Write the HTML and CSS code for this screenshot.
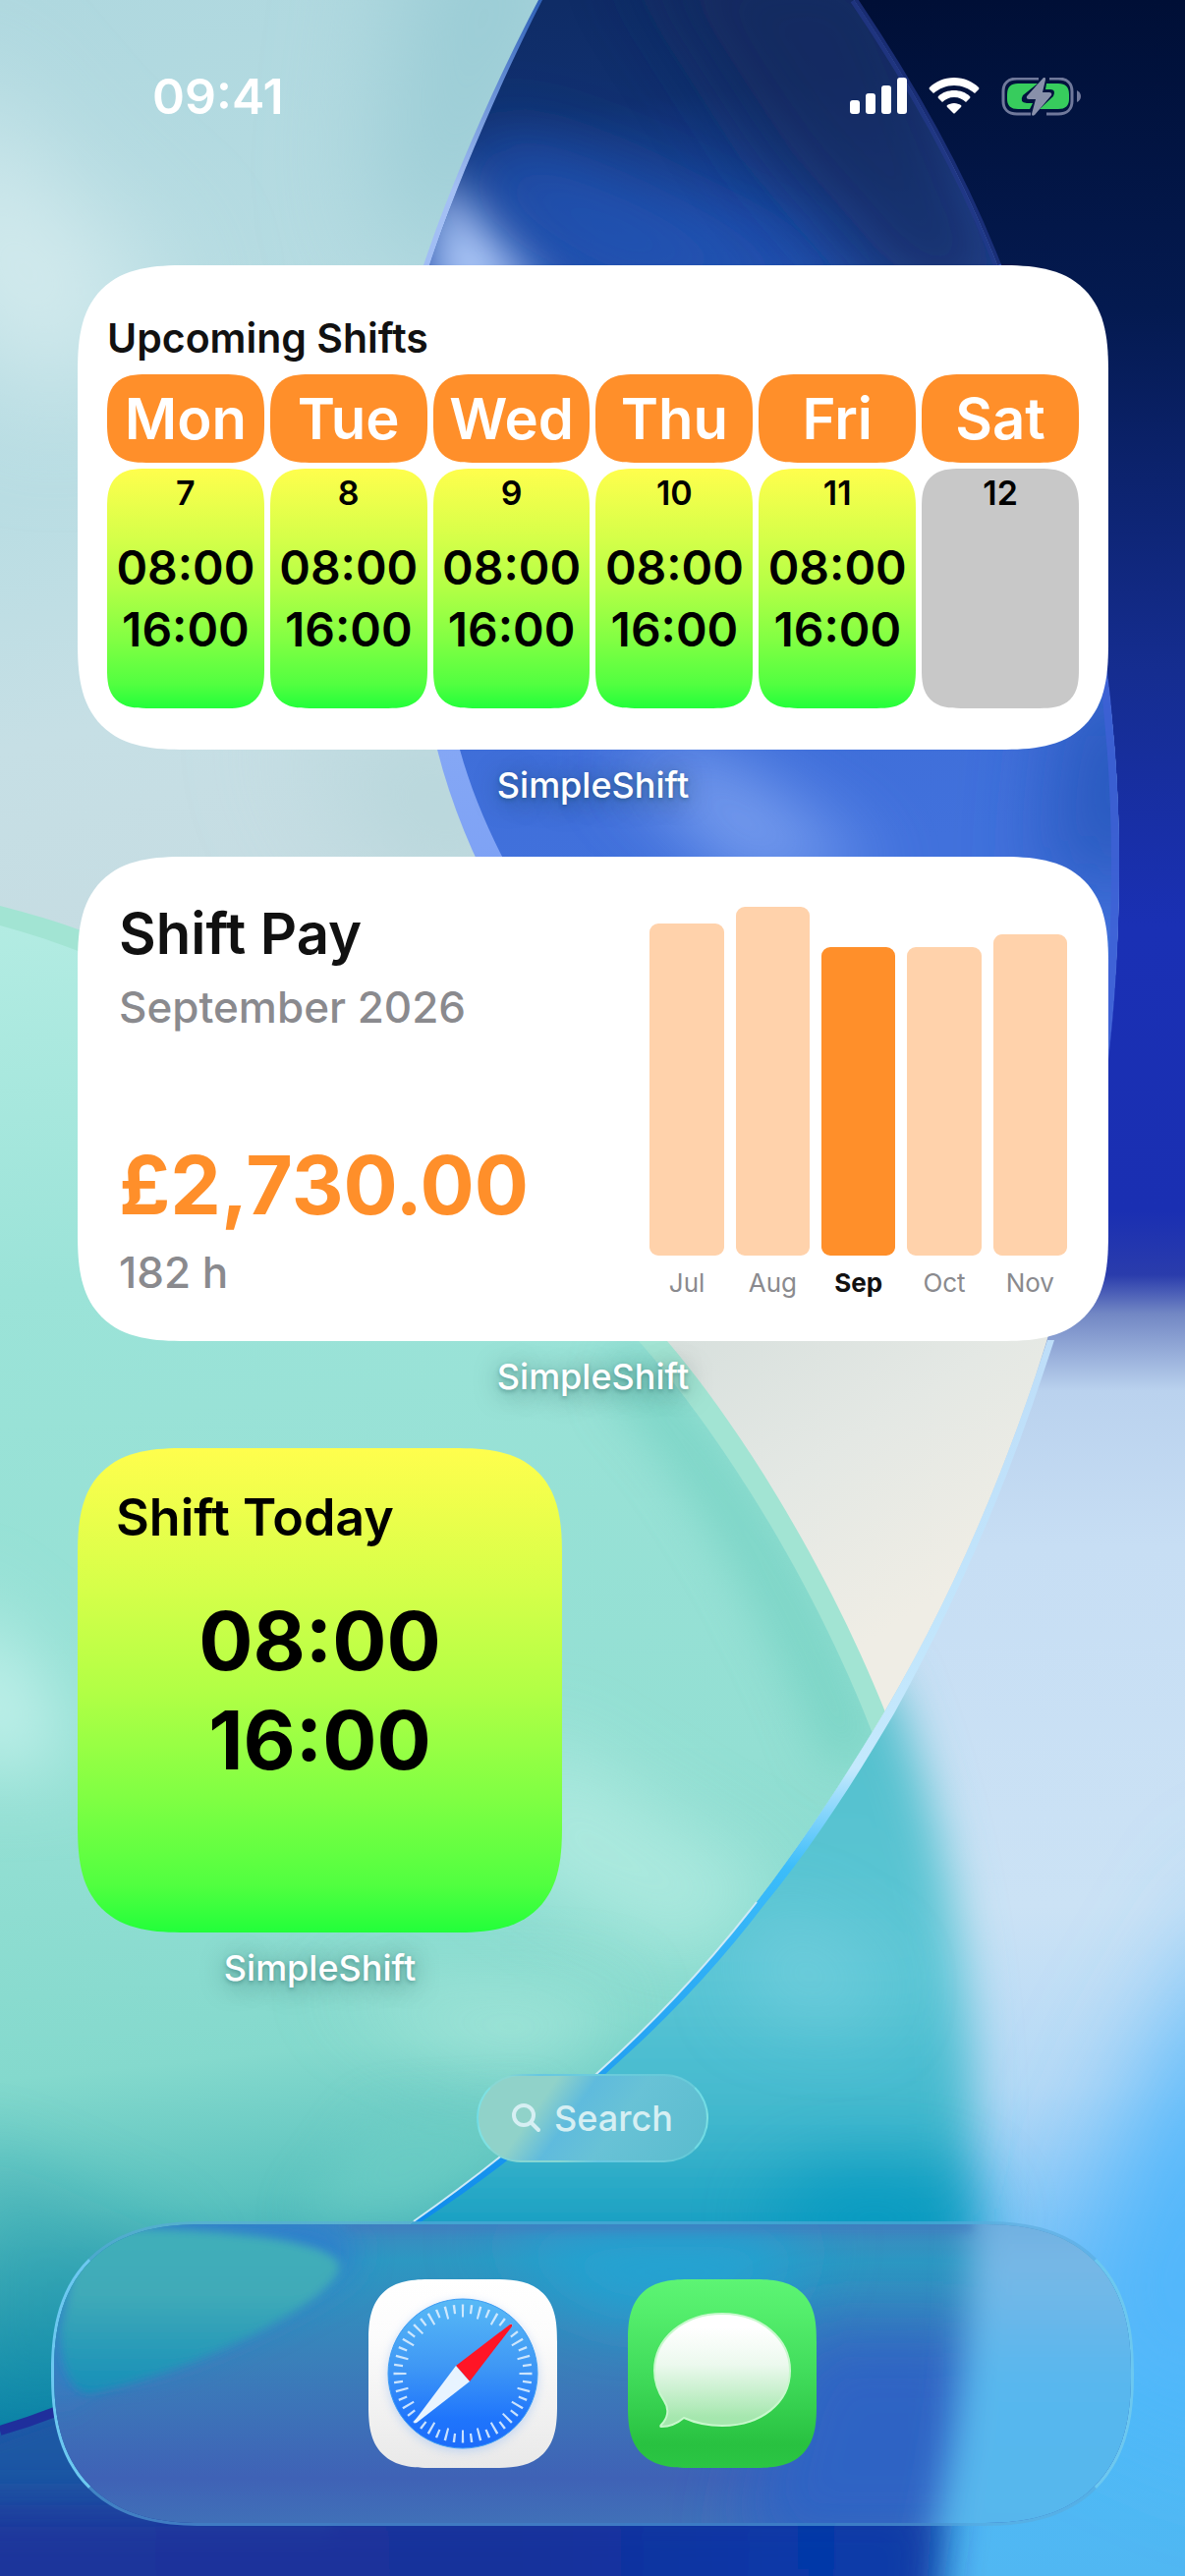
FILE: index.html
```html
<!DOCTYPE html>
<html lang="en">
    <head>
        <meta charset="utf-8">
        <title>Home screen</title>
        <link rel="stylesheet" href="styles.css">
    </head>
    <body>
        <div class="phone">
            <!-- wallpaper -->
            <svg class="wallpaper" viewBox="0 0 1206 2622" preserveAspectRatio="none" aria-hidden="true">
                <defs>
                    <linearGradient id="outer" x1="0" y1="0" x2="0" y2="1">
                        <stop offset="0" stop-color="#000f36"/>
                        <stop offset=".12" stop-color="#041a50"/>
                        <stop offset=".26" stop-color="#152d90"/>
                        <stop offset=".36" stop-color="#1a30b4"/>
                        <stop offset=".47" stop-color="#1a2fb2"/>
                        <stop offset=".495" stop-color="#2a3cac"/>
                        <stop offset=".51" stop-color="#7287c4"/>
                        <stop offset=".54" stop-color="#bad2ee"/>
                        <stop offset=".6" stop-color="#c7def4"/>
                        <stop offset=".74" stop-color="#cbe2f5"/>
                        <stop offset=".81" stop-color="#b5d9f6"/>
                        <stop offset=".87" stop-color="#80c4f8"/>
                        <stop offset=".93" stop-color="#4fbaf8"/>
                        <stop offset="1" stop-color="#50b7f2"/>
                    </linearGradient>
                    <linearGradient id="sky" x1="0" y1="0" x2="300" y2="1200" gradientUnits="userSpaceOnUse">
                        <stop offset="0" stop-color="#afd8df"/>
                        <stop offset=".4" stop-color="#b9dde3"/>
                        <stop offset=".6" stop-color="#c6dfe5"/>
                        <stop offset="1" stop-color="#c5d9df"/>
                    </linearGradient>
                    <linearGradient id="cream" x1="700" y1="1360" x2="900" y2="1660" gradientUnits="userSpaceOnUse">
                        <stop offset="0" stop-color="#d8e0dd"/>
                        <stop offset=".5" stop-color="#e4e8e4"/>
                        <stop offset="1" stop-color="#efede5"/>
                    </linearGradient>
                    <linearGradient id="lens" x1="600" y1="0" x2="700" y2="880" gradientUnits="userSpaceOnUse">
                        <stop offset="0" stop-color="#0f2c66"/>
                        <stop offset=".12" stop-color="#10306f"/>
                        <stop offset=".28" stop-color="#1c4aa6"/>
                        <stop offset=".6" stop-color="#3c6ad4"/>
                        <stop offset="1" stop-color="#4171dc"/>
                    </linearGradient>
                    <linearGradient id="lensEdge" x1="0" y1="0" x2="0" y2="880" gradientUnits="userSpaceOnUse">
                        <stop offset="0" stop-color="#2f61b8"/>
                        <stop offset=".22" stop-color="#a4c0f4"/>
                        <stop offset="1" stop-color="#7ea2f5"/>
                    </linearGradient>
                    <linearGradient id="green" x1="0" y1="920" x2="160" y2="2480" gradientUnits="userSpaceOnUse">
                        <stop offset="0" stop-color="#b4ece3"/>
                        <stop offset=".25" stop-color="#9be3d8"/>
                        <stop offset=".6" stop-color="#93dfd3"/>
                        <stop offset=".76" stop-color="#84d9cd"/>
                        <stop offset=".85" stop-color="#5cc3bf"/>
                        <stop offset=".95" stop-color="#1c93ad"/>
                        <stop offset="1" stop-color="#0079a4"/>
                    </linearGradient>
                    <linearGradient id="deep" x1="0" y1="1740" x2="0" y2="2622" gradientUnits="userSpaceOnUse">
                        <stop offset="0" stop-color="#54c0cd"/>
                        <stop offset=".3" stop-color="#5cc6d5"/>
                        <stop offset=".48" stop-color="#40b7cd"/>
                        <stop offset=".6" stop-color="#179fc2"/>
                        <stop offset=".76" stop-color="#1b6fb4"/>
                        <stop offset=".88" stop-color="#1b43a0"/>
                        <stop offset="1" stop-color="#17309b"/>
                    </linearGradient>
                    <linearGradient id="floor" x1="0" y1="0" x2="960" y2="0" gradientUnits="userSpaceOnUse">
                        <stop offset="0" stop-color="#1e359b"/>
                        <stop offset=".55" stop-color="#18309b"/>
                        <stop offset=".85" stop-color="#0638a8"/>
                        <stop offset="1" stop-color="#083ea8"/>
                    </linearGradient>
                    <linearGradient id="rim" x1="0" y1="1300" x2="0" y2="2300" gradientUnits="userSpaceOnUse">
                        <stop offset="0" stop-color="#bddcf8"/>
                        <stop offset=".5" stop-color="#c4e9fd"/>
                        <stop offset=".6" stop-color="#3cbdfa"/>
                        <stop offset="1" stop-color="#0a86ea"/>
                    </linearGradient>
                    <clipPath id="disc">
                        <path d="M0 0H869C930 90 980 180 1015 270C1080 420 1139 640 1139 880C1139 1060 1110 1230 1054 1400C1010 1530 960 1640 901 1741C862 1806 818 1874 770 1936C722 1998 668 2056 607 2111C552 2162 490 2213 421 2261C290 2350 150 2425 0 2471Z"/>
                    </clipPath>
                    <clipPath id="lensShape">
                        <path d="M552 0C516 70 467 180 437 270C400 480 424 640 468 763C500 880 590 1020 690 1100H1206V0Z"/>
                    </clipPath>
                    <clipPath id="greenShape">
                        <path d="M0 942C30 950 60 960 90 972C330 1070 510 1205 650 1365C730 1455 830 1610 892 1775V2600H0Z"/>
                    </clipPath>
                    <filter id="b12" filterUnits="userSpaceOnUse" x="-200" y="-100" width="1600" height="2900"><feGaussianBlur stdDeviation="8"/></filter>
                    <filter id="b24" filterUnits="userSpaceOnUse" x="-200" y="-100" width="1600" height="2900"><feGaussianBlur stdDeviation="24"/></filter>
                    <filter id="b40" filterUnits="userSpaceOnUse" x="-200" y="-100" width="1600" height="2900"><feGaussianBlur stdDeviation="40"/></filter>
                    <filter id="b60" filterUnits="userSpaceOnUse" x="-300" y="-300" width="1800" height="3300"><feGaussianBlur stdDeviation="60"/></filter>
                </defs>
                <rect width="1206" height="2622" fill="url(#outer)"/>
                <path d="M1300 1900L1160 2140L1080 2400L1300 2500Z" fill="#4fb6fb" filter="url(#b60)"/>
                <path d="M901 1700C960 1850 996 2000 990 2240C988 2400 960 2500 935 2700H-100V2300L500 1900Z" fill="url(#deep)" filter="url(#b24)"/>
                <ellipse cx="890" cy="2260" rx="110" ry="50" fill="#0698c0" opacity=".8" filter="url(#b40)"/>
                <path d="M780 1940L900 2010L880 2060L760 2040Z" fill="#7ad2e0" opacity=".7" filter="url(#b40)"/>
                <path d="M-20 2487C140 2434 290 2364 430 2271L300 2700H-20Z" fill="#1c58a4" filter="url(#b12)"/>
                <path d="M-100 2550H950L930 2800H-100Z" fill="url(#floor)" filter="url(#b24)"/>
                <g clip-path="url(#disc)">
                    <rect width="1206" height="2622" fill="url(#sky)"/>
                    <path d="M-60 60L40 180L170 300L60 420L-80 300Z" fill="#d4ebee" filter="url(#b60)"/>
                    <path d="M430 -100L620 -100L460 300L390 200Z" fill="#98cbd4" filter="url(#b60)"/>
                    <path d="M300 740L500 740L560 900L420 900Z" fill="#b6d6da" filter="url(#b60)"/>
                    <path d="M548 0C511 70 461 180 431 270C390 480 400 620 445 763C480 900 560 1020 660 1100H1206V0Z" fill="url(#lensEdge)"/>
                    <g clip-path="url(#lensShape)">
                        <rect width="1206" height="1200" fill="url(#lens)"/>
                        <path d="M500 140L620 180L860 300L640 300L470 200Z" fill="#2352b2" filter="url(#b40)"/>
                        <path d="M440 170L560 310L440 310Z" fill="#b4cdfb" filter="url(#b24)"/>
                        <path d="M640 -60H900L1060 320L920 320L780 160Z" fill="#132c5e" opacity=".8" filter="url(#b40)"/>
                        <path d="M620 760L720 770L900 890L760 890Z" fill="#98b8fa" opacity=".8" filter="url(#b40)"/>
                        <path d="M1080 700H1200V900H1060Z" fill="#2a5ac0" filter="url(#b40)"/>
                    </g>
                    <path d="M560 1250H1206V2000H560Z" fill="url(#cream)"/>
                    <path d="M0 922C30 930 60 938 90 950C350 1050 540 1190 679 1365C760 1460 850 1610 908 1760V2600H0Z" fill="#a2e4d3"/>
                    <g clip-path="url(#greenShape)">
                        <rect y="900" width="1206" height="1700" fill="url(#green)"/>
                        <path d="M640 1360C740 1460 840 1610 900 1790L840 1800C790 1660 700 1500 620 1420Z" fill="#72d0c1" opacity=".7" filter="url(#b24)"/>
                        <path d="M540 1760L700 1860L800 1920L700 2000L500 1900Z" fill="#b4ece2" opacity=".8" filter="url(#b40)"/>
                        <path d="M-60 1620L40 1700L80 1800L-60 1800Z" fill="#c0f0ea" filter="url(#b40)"/>
                        <path d="M330 2020L640 2030L560 2110L460 2090Z" fill="#b0ebdf" opacity=".7" filter="url(#b40)"/>
                        <path d="M-40 2180L180 2280L200 2420L-40 2480Z" fill="#0d86a8" opacity=".3" filter="url(#b40)"/>
                        <path d="M380 2150L560 2140L430 2261L300 2261Z" fill="#6fcfc6" opacity=".6" filter="url(#b24)"/>
                    </g>
                </g>
                <!-- glass edge of the big disc -->
                <path d="M869 0C930 90 980 180 1015 270" fill="none" stroke="#24398c" stroke-width="8" opacity=".7"/>
                <path d="M1015 270C1080 420 1135 640 1135 880C1135 960 1130 1040 1120 1110" fill="none" stroke="#3f60d6" stroke-width="8" opacity=".8"/>
                <path d="M1066 1364L1054 1400C1010 1530 960 1640 901 1741C862 1806 818 1874 770 1936C722 1998 668 2056 607 2111C552 2162 490 2213 421 2261L428 2262C498 2216 562 2166 614 2113C678 2056 730 2002 776 1941C828 1878 870 1812 910 1744C966 1643 1018 1530 1061 1400L1073 1364Z" fill="url(#rim)"/>
                <path d="M770 1936C722 1998 668 2056 607 2111C552 2162 490 2213 421 2261" fill="none" stroke="#cdeaf7" stroke-width="2"/>
                <path d="M0 2474Q28 2466 56 2455" fill="none" stroke="#1f2f9c" stroke-width="10"/>
            </svg>

            <!-- status bar -->
            <header class="status">
                <time class="clock">09:41</time>
                <div class="indicators">
                    <svg width="58" height="38" viewBox="0 0 58 38" fill="#fff">
                        <rect x="0" y="23" width="10" height="14" rx="3"/>
                        <rect x="16" y="16" width="10" height="21" rx="3"/>
                        <rect x="32" y="8" width="10" height="29" rx="3"/>
                        <rect x="48" y="0" width="10" height="37" rx="3"/>
                    </svg>
                    <svg width="52" height="38" viewBox="0 0 52 38" fill="#fff">
                        <path d="M26 0C36 0 45 4 51 10Q52 11 51 12L47 16C41 11 34 8 26 8S11 11 5 16L1 12Q0 11 1 10C7 4 16 0 26 0Z"/>
                        <path d="M26 13C32 13 38 15 42 19Q43 20 42 21L38 25C35 22 31 20 26 20S17 22 14 25L10 21Q9 20 10 19C14 15 20 13 26 13Z"/>
                        <path d="M26 26C29 26 31 27 33 28Q34 29 33 30L27 36Q26 37 25 36L19 30Q18 29 19 28C21 27 23 26 26 26Z"/>
                    </svg>
                    <svg width="82" height="42" viewBox="0 0 82 42">
                        <path d="M38 1H16C7 1 2 6 2 14V24C2 32 7 37 16 37H30M46 37H58C67 37 72 32 72 24V14C72 6 67 1 58 1H49" fill="none" stroke="#70799b" stroke-width="3"/>
                        <path d="M77 13Q81 15 81 19T77 25Z" fill="#70799b"/>
                        <path d="M37 6H17Q6 6 6 17V22Q6 32 17 32H29L32 26H26Q18 25 22 18Z" fill="#37cc5d"/>
                        <path d="M46 6H58Q69 6 69 17V22Q69 32 58 32H39L53 19Q56 12 50 12H45Z" fill="#37cc5d"/>
                        <path d="M43 0L26 19Q25 22 28 22H35L31 37Q31 40 34 38L51 18Q52 15 49 15H42L45 2Q45 -1 43 0Z" fill="#8890aa"/>
                    </svg>
                </div>
            </header>

            <main class="widgets">
                <section class="widget">
                    <div class="card upcoming">
                        <h2>Upcoming Shifts</h2>
                        <table class="shifts">
                            <thead>
                                <tr><th>Mon</th><th>Tue</th><th>Wed</th><th>Thu</th><th>Fri</th><th>Sat</th></tr>
                            </thead>
                            <tbody>
                                <tr>
                                    <td class="work"><div class="date">7</div><div class="hours">08:00<br>16:00</div></td>
                                    <td class="work"><div class="date">8</div><div class="hours">08:00<br>16:00</div></td>
                                    <td class="work"><div class="date">9</div><div class="hours">08:00<br>16:00</div></td>
                                    <td class="work"><div class="date">10</div><div class="hours">08:00<br>16:00</div></td>
                                    <td class="work"><div class="date">11</div><div class="hours">08:00<br>16:00</div></td>
                                    <td class="off"><div class="date">12</div></td>
                                </tr>
                            </tbody>
                        </table>
                    </div>
                    <p class="app-name">SimpleShift</p>
                </section>

                <section class="widget">
                    <div class="card pay">
                        <div class="summary">
                            <h2>Shift Pay</h2>
                            <p class="month">September 2026</p>
                            <p class="amount">£2,730.00</p>
                            <p class="total">182&nbsp;h</p>
                        </div>
                        <div class="chart">
                            <div class="col"><div class="plot"><div class="bar" style="height:338px"></div></div>Jul</div>
                            <div class="col"><div class="plot"><div class="bar" style="height:355px"></div></div>Aug</div>
                            <div class="col current"><div class="plot"><div class="bar" style="height:314px"></div></div>Sep</div>
                            <div class="col"><div class="plot"><div class="bar" style="height:314px"></div></div>Oct</div>
                            <div class="col"><div class="plot"><div class="bar" style="height:327px"></div></div>Nov</div>
                        </div>
                    </div>
                    <p class="app-name">SimpleShift</p>
                </section>

                <section class="widget small">
                    <div class="card today">
                        <h2>Shift Today</h2>
                        <p class="now">08:00<br>16:00</p>
                    </div>
                    <p class="app-name">SimpleShift</p>
                </section>
            </main>

            <button class="search" type="button">
                <svg width="30" height="30" viewBox="0 0 30 30" fill="none" stroke="currentColor" stroke-width="4" stroke-linecap="round">
                    <circle cx="12" cy="12" r="10"/>
                    <path d="M20 20L27 27"/>
                </svg>
                Search
            </button>

            <nav class="dock">
                <svg class="glass" viewBox="0 0 1102 310" preserveAspectRatio="none" aria-hidden="true">
                    <defs>
                        <linearGradient id="g1" x1="0" y1="0" x2="0" y2="1">
                            <stop offset="0" stop-color="#3f86bf"/>
                            <stop offset=".12" stop-color="#2c98c2"/>
                            <stop offset=".45" stop-color="#3a80ba"/>
                            <stop offset=".85" stop-color="#3f62b6"/>
                            <stop offset="1" stop-color="#4070b8"/>
                        </linearGradient>
                        <linearGradient id="g2" x1="0" y1="0" x2="0" y2="1">
                            <stop offset="0" stop-color="#40afb9"/>
                            <stop offset=".4" stop-color="#3faab8"/>
                            <stop offset="1" stop-color="#168eb8"/>
                        </linearGradient>
                        <linearGradient id="g3" x1="0" y1="0" x2="0" y2="1">
                            <stop offset="0" stop-color="#6aa9dc"/>
                            <stop offset=".2" stop-color="#78b8e6"/>
                            <stop offset=".5" stop-color="#58b7ee"/>
                            <stop offset="1" stop-color="#55b6ec"/>
                        </linearGradient>
                        <filter id="d6" filterUnits="userSpaceOnUse" x="-100" y="-100" width="1300" height="500"><feGaussianBlur stdDeviation="5"/></filter>
                        <filter id="d20" filterUnits="userSpaceOnUse" x="-100" y="-100" width="1400" height="600"><feGaussianBlur stdDeviation="18"/></filter>
                        <filter id="d40" filterUnits="userSpaceOnUse" x="-100" y="-100" width="1400" height="600"><feGaussianBlur stdDeviation="36"/></filter>
                    </defs>
                    <rect width="1102" height="310" fill="url(#g1)"/>
                    <path d="M440 10H780L720 90H560Z" fill="#24a6d6" filter="url(#d40)"/>
                    <path d="M760 110H960V340H700Z" fill="#2f63c4" filter="url(#d40)"/>
                    <path d="M30 150Q120 160 300 50Q330 0 250 -10L60 -10Q0 60 0 190Z" fill="#2f80cc" filter="url(#d20)"/>
                    <path d="M60 4C190 4 292 20 292 44C292 76 150 152 36 176Q8 174 6 110L24 30Z" fill="url(#g2)" filter="url(#d6)"/>
                    <path d="M940 -40C938 100 925 220 890 360H1240V-40Z" fill="url(#g3)" filter="url(#d20)"/>
                    <rect x="300" y="-3" width="640" height="10" fill="#3f7ac0" opacity=".7" filter="url(#d6)"/>
                </svg>
                <a class="app" href="#" aria-label="Safari">
                    <svg viewBox="0 0 192 192">
                        <defs>
                            <linearGradient id="s1" x1="0" y1="0" x2="0" y2="1">
                                <stop offset="0" stop-color="#fff"/>
                                <stop offset=".3" stop-color="#fcfcfc"/>
                                <stop offset="1" stop-color="#e9e9e9"/>
                            </linearGradient>
                            <linearGradient id="s2" x1="0" y1="0" x2="0" y2="1">
                                <stop offset="0" stop-color="#58baf6"/>
                                <stop offset=".45" stop-color="#3f98f5"/>
                                <stop offset=".8" stop-color="#1f75fc"/>
                                <stop offset="1" stop-color="#1c6cfa"/>
                            </linearGradient>
                        </defs>
                        <rect width="192" height="192" fill="url(#s1)"/>
                        <circle cx="96" cy="99" r="77" fill="#9cc0f5" opacity=".5" filter="url(#d6)"/>
                        <circle cx="96" cy="96" r="76" fill="url(#s2)" stroke="#3d9cf3" stroke-width="1"/>
                        <g fill="none" stroke="#dceefe" opacity=".9">
                            <circle cx="96" cy="96" r="64" stroke-width="13" pathLength="360" stroke-dasharray="2 13" stroke-dashoffset="1"/>
                            <circle cx="96" cy="96" r="66" stroke-width="9" pathLength="360" stroke-dasharray="2 13" stroke-dashoffset="-6.5"/>
                        </g>
                        <path d="M89 88L144 46Q147 45 146 48L103 104Z" fill="#ff1526"/>
                        <path d="M89 88L103 104L49 146Q46 147 47 144Z" fill="#e8f4ff"/>
                    </svg>
                </a>
                <a class="app" href="#" aria-label="Messages">
                    <svg viewBox="0 0 192 192">
                        <defs>
                            <linearGradient id="m1" x1="0" y1="0" x2="0" y2="1">
                                <stop offset="0" stop-color="#5df474"/>
                                <stop offset=".15" stop-color="#55ef6d"/>
                                <stop offset=".5" stop-color="#41dc5b"/>
                                <stop offset=".88" stop-color="#28c140"/>
                                <stop offset="1" stop-color="#2bc644"/>
                            </linearGradient>
                            <linearGradient id="m2" x1="0" y1="0" x2="0" y2="1">
                                <stop offset=".12" stop-color="#fff"/>
                                <stop offset=".45" stop-color="#ecf9ee"/>
                                <stop offset=".92" stop-color="#a5e7ae"/>
                            </linearGradient>
                        </defs>
                        <rect width="192" height="192" fill="url(#m1)"/>
                        <path d="M96 35C135 35 165 60 165 93C165 126 135 149 96 149C81 149 68 146 57 141C50 147 42 150 34 150C33 150 33 149 34 148C40 142 43 133 37 124C31 115 27 106 27 93C27 60 57 35 96 35Z" fill="url(#m2)" stroke="#c8f8cd" stroke-width="2"/>
                    </svg>
                </a>
            </nav>
        </div>
    </body>
</html>
```

FILE: styles.css
```css
body{
    margin:0;
    font-family:Inter, "Open Sans", sans-serif;
    color:#111;
}
h2,p{
    margin:0;
}
h2{
    font-weight:600;
}
.phone{
    position:relative;
    min-height:100vh;
    display:flex;
    flex-direction:column;
    overflow:hidden;
}
.phone > *{
    position:relative;
}
.phone > .wallpaper{
    position:absolute;
    inset:0;
    width:100%;
    height:100%;
}

/* status bar */
.status{
    display:flex;
    justify-content:space-between;
    align-items:flex-start;
    height:203px;
    padding:67px 105px 0 155px;
    color:#fff;
}
.clock{
    font-size:50px;
    line-height:62px;
    font-weight:600;
}
.indicators{
    display:flex;
    gap:22px;
    padding-top:12px;
}

/* widgets */
.widgets{
    display:flex;
    flex-direction:column;
    gap:60px;
    padding:0 78px 0 79px;
}
.card{
    box-sizing:border-box;
    min-height:493px;
    border-radius:82px;
    background:#fff;
}
.app-name{
    padding-top:11px;
    margin-bottom:-13px;
    font-size:36px;
    line-height:51px;
    font-weight:500;
    text-align:center;
    color:#fff;
    text-shadow:0 2px 4px rgba(0,60,60,.3), 0 4px 24px rgba(0,60,60,.5);
}
.upcoming{
    padding:50px 24px 36px;
}
.upcoming h2{
    padding-left:6px;
    font-size:41px;
    line-height:48px;
}
.shifts{
    width:100%;
    margin-top:7px;
    table-layout:fixed;
    border-spacing:6px;
    text-align:center;
}
.shifts th{
    height:90px;
    padding:0;
    border-radius:32px;
    background:#ff8f2a;
    color:#fff;
    font-size:58px;
    line-height:70px;
    font-weight:600;
}
.shifts td{
    box-sizing:border-box;
    height:244px;
    padding:5px 0 0;
    border-radius:32px;
    vertical-align:top;
    color:#000;
    font-weight:600;
}
.work,.today{
    background:linear-gradient(#fffe4d, #d4ff49 30%, #b2ff45 50%, #80ff43 72%, #52ff40 90%, #22ff3a);
}
.off{
    background:#c8c8c8;
}
.date{
    font-size:34px;
    line-height:40px;
}
.hours{
    margin-top:24px;
    font-size:48px;
    line-height:63px;
}

/* pay widget */
.pay{
    display:flex;
    justify-content:space-between;
    padding:43px 42px;
}
.summary{
    display:flex;
    flex-direction:column;
}
.pay h2{
    font-size:58px;
    line-height:70px;
}
.month,.total{
    font-size:44px;
    line-height:54px;
    font-weight:500;
    color:#8a8a8e;
}
.month{
    margin-top:13px;
}
.amount{
    margin-top:auto;
    margin-bottom:13px;
    font-size:82px;
    line-height:96px;
    font-weight:700;
    color:#ff8f2a;
}
.chart{
    display:flex;
    align-items:flex-end;
    gap:12px;
    width:44%;
}
.col{
    flex:1;
    text-align:center;
    font-size:26px;
    line-height:32px;
    color:#8a8a8e;
}
.plot{
    display:flex;
    align-items:flex-end;
    height:355px;
    margin-bottom:12px;
}
.bar{
    width:100%;
    border-radius:9px;
    background:#ffd2ab;
}
.current{
    color:#111;
    font-weight:700;
}
.current .bar{
    background:#ff8f2a;
}

/* small widget */
.small{
    width:47%;
}
.today{
    padding:40px 39px;
    color:#000;
}
.today h2{
    font-size:52px;
    line-height:62px;
}
.now{
    margin-top:44px;
    font-size:82px;
    line-height:101px;
    font-weight:700;
    text-align:center;
}

/* search + dock */
.search{
    display:flex;
    align-items:center;
    align-self:center;
    gap:13px;
    height:90px;
    margin:auto 0 60px;
    padding:0 34px;
    border:2px solid rgba(120,230,235,.75);
    border-top-color:rgba(120,230,235,.3);
    border-bottom-color:rgba(120,230,235,.3);
    border-radius:45px;
    background:linear-gradient(125deg, #90d2c9 28%, #5fbbdd 42%, #68c2d6 60%, #5abcce);
    color:#d6eff3;
    font-family:inherit;
    font-size:36px;
    font-weight:500;
}
.dock{
    box-sizing:border-box;
    display:flex;
    justify-content:center;
    align-items:center;
    gap:72px;
    height:310px;
    margin:0 52px 51px;
    border:3px solid #6cc8f0;
    border-top-color:rgba(90,170,220,.6);
    border-bottom-color:rgba(90,170,220,.6);
    border-radius:130px;
    overflow:hidden;
}
.glass{
    position:absolute;
    inset:0;
    width:100%;
    height:100%;
}
.app{
    position:relative;
    width:192px;
    height:192px;
    border-radius:48px;
    overflow:hidden;
}
.app svg{
    display:block;
}

/* continuous corners where the browser can draw them */
@supports (corner-shape: squircle){
    .card{
        border-radius:110px;
        corner-shape:superellipse(1.46);
    }
    .shifts th,.shifts td{
        border-radius:40px;
        corner-shape:superellipse(1.46);
    }
    .app{
        border-radius:64px;
        corner-shape:superellipse(1.46);
    }
    .dock{
        border-radius:155px;
        corner-shape:superellipse(1.3);
    }
}
```
